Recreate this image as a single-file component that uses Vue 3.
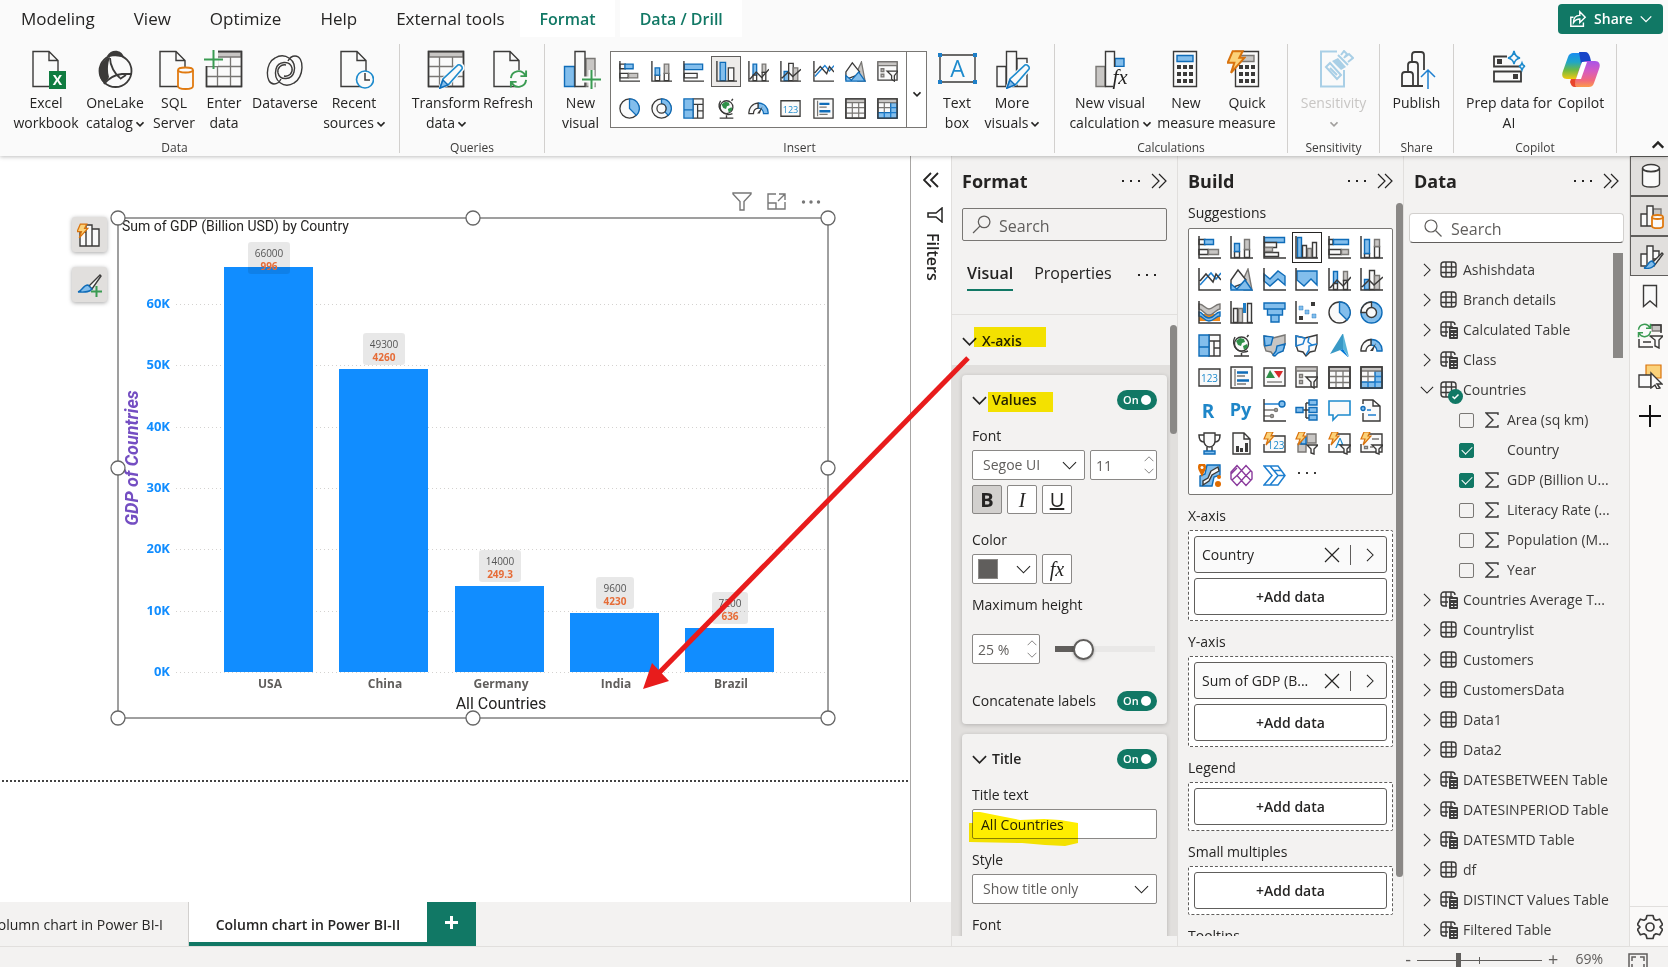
<script setup>
import { ref } from 'vue'

const menu = ['Modeling', 'View', 'Optimize', 'Help', 'External tools']

const groups = [
  { id: 'data', label: 'Data', items: [
    { icon: 'r-cut', a: '', b: '', drop: true },
    { icon: 'r-excel', a: 'Excel', b: 'workbook' },
    { icon: 'r-onelake', a: 'OneLake', b: 'catalog', drop: true },
    { icon: 'r-sql', a: 'SQL', b: 'Server' },
    { icon: 'r-enter', a: 'Enter', b: 'data' },
    { icon: 'r-dataverse', a: 'Dataverse', b: '' },
    { icon: 'r-recent', a: 'Recent', b: 'sources', drop: true },
  ] },
  { id: 'queries', label: 'Queries', items: [
    { icon: 'r-transform', a: 'Transform', b: 'data', drop: true },
    { icon: 'r-refresh', a: 'Refresh', b: '' },
  ] },
  { id: 'insert', label: 'Insert', items: [
    { icon: 'r-newvisual', a: 'New', b: 'visual' },
    { gallery: true },
    { icon: 'r-textbox', a: 'Text', b: 'box' },
    { icon: 'r-more', a: 'More', b: 'visuals', drop: true },
  ] },
  { id: 'calc', label: 'Calculations', items: [
    { icon: 'r-fx', a: 'New visual', b: 'calculation', drop: true },
    { icon: 'r-measure', a: 'New', b: 'measure' },
    { icon: 'r-quick', a: 'Quick', b: 'measure' },
  ] },
  { id: 'sens', label: 'Sensitivity', items: [
    { icon: 'r-sens', a: 'Sensitivity', b: '', drop: true, off: true },
  ] },
  { id: 'share', label: 'Share', items: [
    { icon: 'r-publish', a: 'Publish', b: '' },
  ] },
  { id: 'copilot', label: 'Copilot', items: [
    { icon: 'r-prep', a: 'Prep data for', b: 'AI' },
    { icon: 'r-copilot', a: 'Copilot', b: '' },
  ] },
]

const gallery = ['sbar', 'scol', 'cbar2', 'ccol2', 'linestack', 'lineclus', 'line', 'area', 'slicer',
  'pie', 'donut2', 'treemap', 'globe', 'gauge', 'card', 'multirow', 'table', 'matrix']

const visuals = ['sbar', 'scol', 'cbar', 'ccol', 'hbar', 'hcol', 'line', 'area', 'sarea', 'harea', 'linestack', 'lineclus',
  'ribbon', 'waterfall', 'funnel', 'scatter', 'pie', 'donut', 'treemap', 'globe', 'fmap', 'smap', 'azure', 'gauge',
  'card', 'multirow', 'kpi', 'slicer', 'table', 'matrix', 'rscript', 'python', 'influence', 'decomp', 'qna', 'narrative',
  'trophy', 'paginated', 'newcard', 'btnslicer', 'textslicer', 'listslicer', 'arcgis', 'powerapps', 'automate', 'dots']

const K = 61.35
const base = 454
const bars = [
  { name: 'USA', x: 106, top: 49, a: '66000', b: '996', w: 42, box: 24 },
  { name: 'China', x: 221, top: 151, a: '49300', b: '4260', w: 42, box: 115 },
  { name: 'Germany', x: 337, top: 368, a: '14000', b: '249.3', w: 42, box: 332 },
  { name: 'India', x: 452, top: 395, a: '9600', b: '4230', w: 38, box: 359 },
  { name: 'Brazil', x: 567, top: 410, a: '7200', b: '636', w: 36, box: 374 },
]
const ticks = [0, 1, 2, 3, 4, 5, 6].map(i => ({ t: i * 10 + 'K', y: Math.round(base - i * K) }))
const handles = [[0, 0], [355, 0], [710, 0], [0, 250], [710, 250], [0, 500], [355, 500], [710, 500]]

const wells = [
  { label: 'X-axis', field: 'Country' },
  { label: 'Y-axis', field: 'Sum of GDP (B...' },
  { label: 'Legend' },
  { label: 'Small multiples' },
]

const tables = [
  { n: 'Ashishdata' }, { n: 'Branch details' }, { n: 'Calculated Table', calc: true }, { n: 'Class', calc: true },
  { n: 'Countries', open: true, fields: [
    { n: 'Area (sq km)', sum: true, on: false },
    { n: 'Country', sum: false, on: true },
    { n: 'GDP (Billion U...', sum: true, on: true },
    { n: 'Literacy Rate (...', sum: true, on: false },
    { n: 'Population (M...', sum: true, on: false },
    { n: 'Year', sum: true, on: false },
  ] },
  { n: 'Countries Average T...', calc: true }, { n: 'Countrylist' }, { n: 'Customers' }, { n: 'CustomersData' },
  { n: 'Data1' }, { n: 'Data2' }, { n: 'DATESBETWEEN Table', calc: true }, { n: 'DATESINPERIOD Table', calc: true },
  { n: 'DATESMTD Table', calc: true }, { n: 'df' }, { n: 'DISTINCT Values Table', calc: true }, { n: 'Filtered Table', calc: true },
]

const rail = [
  { icon: 'p-data', on: true, n: 'Data' }, { icon: 'p-build', on: true, n: 'Build visual' },
  { icon: 'p-format', on: true, n: 'Format visual' }, { icon: 'p-bookmark', n: 'Bookmarks' },
  { icon: 'p-sync', n: 'Sync slicers' }, { icon: 'p-select', n: 'Selection' }, { icon: 'p-add', n: 'Add pane' },
]

const maxHeight = ref(23)
const zoomLevel = ref(32)
const titleText = ref('All Countries')
</script>

<template>
  <svg class="defs" aria-hidden="true">
    <defs>
      <linearGradient id="cp1" x1="0" y1="0" x2="0" y2="1">
        <stop offset="0" stop-color="#1a8df0" /><stop offset=".35" stop-color="#1fa6c8" /><stop offset=".65" stop-color="#6cb944" /><stop offset="1" stop-color="#f2c811" />
      </linearGradient>
      <linearGradient id="cp2" x1="0" y1="0" x2="0" y2="1">
        <stop offset="0" stop-color="#a855e8" /><stop offset=".4" stop-color="#d65bc0" /><stop offset=".75" stop-color="#f26a7c" /><stop offset="1" stop-color="#fb9a4b" />
      </linearGradient>

      <symbol id="chev-down" viewBox="0 0 16 16"><path class="ln" d="M1 4.5l7 7 7-7" /></symbol>
      <symbol id="chev-up" viewBox="0 0 16 16"><path class="ln" d="M1 11.5l7-7 7 7" /></symbol>
      <symbol id="chev-right" viewBox="0 0 16 16"><path class="ln" d="M4.5 1l7 7-7 7" /></symbol>
      <symbol id="dbl-right" viewBox="0 0 16 16"><path class="ln" d="M1 1l7 7-7 7M8 1l7 7-7 7" /></symbol>
      <symbol id="dbl-left" viewBox="0 0 16 16"><path class="ln" d="M8 1L1 8l7 7M15 1L8 8l7 7" /></symbol>
      <symbol id="dots3" viewBox="0 0 20 16"><path class="fl" d="M1 7h2v2H1zM9 7h2v2H9zM17 7h2v2h-2z" /></symbol>
      <symbol id="cross" viewBox="0 0 16 16"><path class="ln" d="M1 1l14 14M15 1L1 15" /></symbol>
      <symbol id="find" viewBox="0 0 18 18"><circle class="ln" cx="11.5" cy="6.5" r="5.5" /><path class="ln" d="M7.5 10.5L1 17" /></symbol>
      <symbol id="find-r" viewBox="0 0 18 18"><circle class="ln" cx="7" cy="7" r="6" /><path class="ln" d="M11.5 11.5l6 6" /></symbol>

      <symbol id="sbar" viewBox="0 0 23 23"><path class="w" d="M1 3.5h6v5H1zM1 13.5h9v5H1z" /><path class="b" d="M6.5 3.5h9v5h-9z" /><path class="g" d="M10.5 13.5h10v5h-10z" /><path class="d" d="M1 0v22h22" /></symbol>
      <symbol id="scol" viewBox="0 0 23 23"><path class="w" d="M4.5 15.5h5v6h-5zM14.5 13.5h5v8h-5z" /><path class="b" d="M4.5 7.5h5v8h-5z" /><path class="g" d="M14.5 3.5h5v10h-5z" /><path class="d" d="M1 0v22h22" /></symbol>
      <symbol id="cbar" viewBox="0 0 23 23"><path class="b" d="M1.5 1.5h20v5h-20z" /><path class="w" d="M1.5 6.5h12v5h-12zM1.5 16.5h14v4h-14z" /><path class="g" d="M1.5 11.5h8v4h-8z" /><path class="d" d="M1 0v22h22" /></symbol>
      <symbol id="cbar2" viewBox="0 0 23 23"><path class="b" d="M1.5 3.5h20v6h-20z" /><path class="w" d="M1.5 13.5h14v5h-14z" /><path class="d" d="M1 0v22h22" /></symbol>
      <symbol id="ccol" viewBox="0 0 23 23"><path class="b" d="M2.5 1.5h4v20h-4z" /><path class="w" d="M7.5 9.5h4v12h-4zM17.5 6.5h4v15h-4z" /><path class="g" d="M12.5 12.5h4v9h-4z" /><path class="d" d="M1 0v22h22" /></symbol>
      <symbol id="ccol2" viewBox="0 0 23 23"><path class="b" d="M4.5 1.5h6v20h-6z" /><path class="w" d="M13.5 7.5h6v14h-6z" /><path class="d" d="M1 0v22h22" /></symbol>
      <symbol id="hbar" viewBox="0 0 23 23"><path class="w" d="M1 3.5h4v5H1zM1 13.5h12v5H1z" /><path class="b" d="M5.5 3.5h15v5h-15z" /><path class="g" d="M13.5 13.5h7v5h-7z" /><path class="d" d="M1 0v22h22" /></symbol>
      <symbol id="hcol" viewBox="0 0 23 23"><path class="w" d="M4.5 17.5h5v4h-5zM14.5 10.5h5v11h-5z" /><path class="b" d="M4.5 3.5h5v14h-5z" /><path class="g" d="M14.5 3.5h5v7h-5z" /><path class="d" d="M1 0v22h22" /></symbol>
      <symbol id="line" viewBox="0 0 23 23"><path class="bl" d="M2 17l11-12 5 6 5-6" /><path class="d" d="M2 13l6-7 7 8 3-8 5 6M1 0v22h22" /></symbol>
      <symbol id="area" viewBox="0 0 23 23"><path class="g" d="M13 12l5-11 4 21h-8z" /><path class="w" d="M1 20V12L8 2l8 10-4 4z" /><path class="b" d="M1 22v-6l6 5 8-9 7 10z" /></symbol>
      <symbol id="sarea" viewBox="0 0 23 23"><path class="b" d="M1 6l6 5 8-8 7 5v9l-7-6-8 7-6-5z" /><path class="d" d="M1 0v22h22" /></symbol>
      <symbol id="harea" viewBox="0 0 23 23"><path class="b" d="M2 3h20v14l-6-6-7 7-7-6z" /><path class="d" d="M1 0v22h22" /></symbol>
      <symbol id="linestack" viewBox="0 0 23 23"><path class="b" d="M5.5 3.5h4v12h-4z" /><path class="g" d="M15.5 3.5h4v9h-4z" /><path class="w" d="M5.5 15.5h4v6h-4zM15.5 12.5h4v9h-4z" /><path class="d" d="M1 0v22h22M2 20l7-8 6 6 8-9" /></symbol>
      <symbol id="lineclus" viewBox="0 0 23 23"><path class="b" d="M4.5 11.5h5v10h-5z" /><path class="w" d="M9.5 2.5h5v19h-5z" /><path class="g" d="M14.5 7.5h5v14h-5z" /><path class="d" d="M1 0v22h22M2 19l7-7 5 5 9-8" /></symbol>
      <symbol id="ribbon" viewBox="0 0 23 23"><path class="of" d="M1 13h21v7H1z" /><path class="g" d="M1 3c5 0 6 5 10 5s6-5 11-5v5c-4 0-6 6-11 6S5 8 1 8z" /><path class="b" d="M1 11c4 0 4 6 10 6s6-6 11-6v4c-4 0-6 5-11 5S5 15 1 15z" /><path class="d" d="M1 0v22h22" /></symbol>
      <symbol id="waterfall" viewBox="0 0 23 23"><path class="w" d="M3.5 7.5h4v14h-4zM17.5 2.5h4v19h-4z" /><path class="g" d="M8.5 7.5h4v14h-4z" /><path class="bs" d="M13 2h3v10h-3z" /><path class="d" d="M1 0v22h22" /></symbol>
      <symbol id="funnel" viewBox="0 0 23 23"><path class="b" d="M1 2h21v6H1zM4.5 8h15v6h-15zM8 14h8v7H8z" /></symbol>
      <symbol id="scatter" viewBox="0 0 23 23"><path class="bf" d="M4 5h4v4H4zM10 9h4v4h-4zM17 13h4v4h-4z" /><path class="df" d="M16 1h4v4h-4zM4 15h4v4H4z" /><path class="d" d="M1 0v22h22" /></symbol>
      <symbol id="pie" viewBox="0 0 23 23"><circle class="w" cx="11.5" cy="11.5" r="10.5" /><path class="b" d="M11.5 1a10.5 10.5 0 0 1 7.5 18l-7.5-7.5z" /></symbol>
      <symbol id="donut" viewBox="0 0 23 23"><circle class="b" cx="11.5" cy="11.5" r="10.5" /><path class="w" d="M11.5 1v5.5a5 5 0 0 0-5 5H1A10.5 10.5 0 0 1 11.5 1z" /><circle class="w" cx="11.5" cy="11.5" r="5" /></symbol>
      <symbol id="donut2" viewBox="0 0 23 23"><circle class="w" cx="11.5" cy="11.5" r="10.5" /><path class="b" d="M11.5 1a10.5 10.5 0 0 1 7.5 18l-4-4a5 5 0 0 0-3.5-8.5z" /><circle class="w" cx="11.5" cy="11.5" r="5" /></symbol>
      <symbol id="treemap" viewBox="0 0 23 23"><path class="w" d="M11 1h11v21H11zM11 7h11M16 7v15M16 14h6" /><path class="b" d="M1 1h10v21H1zM1 13h10" /></symbol>
      <symbol id="globe" viewBox="0 0 23 23"><circle class="w" cx="11.5" cy="10" r="7" /><path class="gf" d="M6 7l4-3 4 1 1 3-3 1-1 3-3-1zM13 12l4-2 1 3-4 3z" /><path class="d" d="M5 3a10 10 0 0 0 13 14M11.5 19v3M4 22h15M17 3l1.5-2" /></symbol>
      <symbol id="fmap" viewBox="0 0 23 23"><path class="g" d="M1 2l9 2 4-1 8-2v9l-2 7-5 1-4 4-3-4-5-1-2-6z" /><path class="b" d="M1 2l9 1-2 8-6 1zM22 10l-8 2-1 5-3 4 2 1 3-3 5-2z" /></symbol>
      <symbol id="smap" viewBox="0 0 23 23"><path class="w" d="M1 2l9 2 4-1 8-2v9l-2 7-5 1-4 4-3-4-5-1-2-6z" /><path class="bl" d="M1 2l9 2-2 6-7 2zM22 10l-8 2v4l-3 5M14 3l-1 5 4 3 5-1" /></symbol>
      <symbol id="azure" viewBox="0 0 23 23"><path fill="#3999c6" d="M15-1L2 20l13-5z" /><path fill="#59b4d9" d="M15-1v16l6 8z" /><path fill="#0078d7" d="M15 15l6 9-9-8z" /></symbol>
      <symbol id="gauge" viewBox="0 0 23 23"><path class="b" d="M11 5.5A10.5 10.5 0 0 1 22 17h-5a6 6 0 0 0-6-6z" /><path class="w" d="M1 17A10.5 10.5 0 0 1 11 5.5V11a6 6 0 0 0-5 6z" /><path class="df" d="M16 9l-3 8h-3z" /></symbol>
      <symbol id="card" viewBox="0 0 23 23"><path class="w" d="M1 3h21v17H1z" /><text class="num" x="11.5" y="16" text-anchor="middle">123</text></symbol>
      <symbol id="multirow" viewBox="0 0 23 23"><path class="w" d="M1 1h21v21H1z" /><path class="bl2" d="M7 6.5h11M7 14.5h12" /><path class="gl" d="M5 3v17M7 10h8M7 18h9" /></symbol>
      <symbol id="kpi" viewBox="0 0 23 23"><path class="w" d="M1 2h21v18H1z" /><path class="gf" d="M3 12l4-8 5 8z" /><path fill="#d92b2b" d="M11 5h9l-4 7z" /><path class="gl" d="M4 16h15" /></symbol>
      <symbol id="slicer" viewBox="0 0 23 23"><path class="w" d="M1 1h21v20H1z" /><path class="g" d="M1 1h21v4H1zM4.5 8.5h3v3h-3zM4.5 14.5h3v3h-3z" /><path class="w" d="M11 11h12l-4 5v6l-3-2v-4z" /></symbol>
      <symbol id="table" viewBox="0 0 23 23"><path class="w" d="M1 1h21v21H1z" /><path class="g" d="M1 1h21v4H1z" /><path class="gl" d="M1 10.5h21M1 16.5h21M8 5v17M15 5v17" /><path class="d" d="M1 1h21v21H1z" /></symbol>
      <symbol id="matrix" viewBox="0 0 23 23"><path class="w" d="M1 1h21v21H1z" /><path class="b" d="M15 5h7v17H1v-6h14z" /><path class="g" d="M1 1h21v4H1z" /><path class="gl" d="M1 10.5h14M8 5v11" /><path class="bl" d="M15 10.5h7M15 16v6M8 16v6M15 16h7" /><path class="d" d="M1 1h21v21H1z" /></symbol>
      <symbol id="rscript" viewBox="0 0 23 23"><text class="big" x="10" y="19" text-anchor="middle">R</text></symbol>
      <symbol id="python" viewBox="0 0 24 23"><text class="big" x="11" y="17" text-anchor="middle">Py</text></symbol>
      <symbol id="influence" viewBox="0 0 23 23"><path class="bl" d="M1 5h15" /><circle class="b" cx="19" cy="5" r="3" /><path class="gl" d="M1 11h10M1 17h6" /><circle class="g" cx="13" cy="11" r="1.5" /><circle class="g" cx="9" cy="17" r="1.5" /><path class="d" d="M1 0v22h22" /></symbol>
      <symbol id="decomp" viewBox="0 0 23 23"><path class="d" d="M8 11h6M11 4v15M11 4h3M11 19h3" /><path class="b" d="M1 8.5h7v5H1zM14 1h8v5h-8zM14 8.5h8v5h-8zM14 16h8v5h-8z" /></symbol>
      <symbol id="qna" viewBox="0 0 23 23"><path class="wb" d="M1 2h21v14H10l-5 5v-5H1z" /></symbol>
      <symbol id="narrative" viewBox="0 0 23 23"><path class="w" d="M3 5V1h10l7 6v15H3v-8M13 1v6h7" /><circle class="b" cx="3" cy="9.5" r="2" /><path class="bl" d="M7 11h4M8 16h8" /></symbol>
      <symbol id="trophy" viewBox="0 0 23 23"><path class="w" d="M6 1h11v8c0 4-3 6-5.5 6S6 13 6 9z" /><path class="d" d="M6 3H1c0 5 2 7 5 7M17 3h5c0 5-2 7-5 7M9 15v4M14 15v4" /><path class="b" d="M6 19h11v3H6z" /></symbol>
      <symbol id="paginated" viewBox="0 0 23 23"><path class="w" d="M3 1h11l6 6v15H3zM14 1v6h6" /><path class="df" d="M6 14h3v6H6zM10 16h3v4h-3zM15 11h3v9h-3z" /></symbol>
      <symbol id="bolt" viewBox="0 0 12 15"><path class="o" d="M4 1h6L8 5h3l-8 9 2-6H1z" /></symbol>
      <symbol id="newcard" viewBox="0 0 23 23"><path class="w" d="M3 4h19v16H1v-8" /><text class="num" x="13" y="17" text-anchor="middle">123</text><use href="#bolt" x="0" y="-1" width="12" height="15" /></symbol>
      <symbol id="btnslicer" viewBox="0 0 23 23"><path class="g" d="M3 12h8v8H3zM12 2h9v9h-9z" /><path class="b" d="M6 5h5v7H6z" /><path class="w" d="M12 13h11l-4 4v5l-3-1v-4z" /><use href="#bolt" x="0" y="-1" width="12" height="15" /></symbol>
      <symbol id="textslicer" viewBox="0 0 23 23"><path class="w" d="M6 2h16v18H1v-8" /><text class="num a" x="12" y="16" text-anchor="middle">A</text><path class="w" d="M12 13h11l-4 4v5l-3-1v-4z" /><use href="#bolt" x="0" y="-1" width="12" height="15" /></symbol>
      <symbol id="listslicer" viewBox="0 0 23 23"><path class="w" d="M6 2h16v18H1v-8" /><path class="gl" d="M12 7h7M4.5 14.5h3v2h-3zM10 15h3" /><path class="w" d="M12 13h11l-4 4v5l-3-1v-4z" /><use href="#bolt" x="0" y="-1" width="12" height="15" /></symbol>
      <symbol id="arcgis" viewBox="0 0 23 23"><path class="b" d="M9 1h13v10l-6 2-2 9H2V12l5-2z" /><path class="w" d="M13 7l7-4 1 4-7 4-3 6-6 4v-4l5-3z" /><path fill="#e06c00" d="M4-1a4 4 0 0 1 4 4c0 3-2 5-4 10C2 8 0 6 0 3a4 4 0 0 1 4-4z" /><circle cx="4" cy="3.5" r="1.5" fill="#fff" /><circle cx="20" cy="20" r="3" fill="#e06c00" /><circle cx="21" cy="13" r="2" fill="#e06c00" /></symbol>
      <symbol id="powerapps" viewBox="0 0 23 23"><path class="pu" d="M11.5 6.5L7 1.5 1 8v7l6 6.500 4.500-5 4.500 5 6-6.500V8l-6-6.500zM11.500 6.500l4.500 5-4.500 5-4.500-5zM1 10l6-6M7 11.500L2 16M16 11.500l5-5M16 11.500l5 5" /></symbol>
      <symbol id="automate" viewBox="0 0 23 23"><path class="bl" d="M1 2h14l7 9.5-7 9.5H1l8-9.5zM7 2l8 9.500M15 11.500L7 21M11 6.500h7M15 11.500h7" /></symbol>
      <symbol id="dots" viewBox="0 0 23 23"><path class="df" d="M3 8h2v2H3zM11 8h2v2h-2zM19 8h2v2h-2z" /></symbol>

      <symbol id="doc" viewBox="0 0 40 40"><path class="w" d="M7 1.5h16l9 9v26H7zM23 1.5v9h9" /></symbol>
      <symbol id="grid36" viewBox="0 0 40 40"><path class="w" d="M2.5 1.5h35v35h-35z" /><path class="g" d="M3 2h34v5H3z" /><path class="gl" d="M3 16.5h34M3 26.5h34M13.5 7v29M26.5 7v29" /><path class="d" d="M2.5 1.5h35v35h-35z" /></symbol>
      <symbol id="pen" viewBox="0 0 26 26"><path class="wh" d="M1 25l3-9L19 1c3-1 6 2 5 5L10 21z" /><path class="wb" d="M1 25l3-9L19 2c2-1 5 2 4 4L10 21z" /><path class="b" d="M1 25l3-8 5 5z" /></symbol>
      <symbol id="spin" viewBox="0 0 20 20"><path class="gn" d="M2 9a8 8 0 0 1 15-3M18 1v6h-6M18 11a8 8 0 0 1-15 3M2 19v-6h6" /></symbol>

      <symbol id="r-cut" viewBox="0 0 40 40"><path class="w" d="M1 20h35v18H1z" /><path class="g" d="M1 20h35v4H1z" /><path class="gl" d="M1 29h35M1 34h35M28 24v14" /></symbol>
      <symbol id="r-excel" viewBox="0 0 40 40"><use href="#doc" width="40" height="40" /><path fill="#107c41" d="M23 21h17v18H23z" /><text class="xl" x="31.5" y="35" text-anchor="middle">X</text></symbol>
      <symbol id="r-onelake" viewBox="0 0 40 40"><circle class="dn" cx="20.5" cy="21" r="16" /><path class="df" d="M12 6c4-7 14-7 17 1-5-1-11-1-17-1zM15 7C3 11 1 26 9 33c3-2 4-4 5-6-2-7-1-14 1-20z" /><path class="dn" d="M15 8c0 8 5 16 10 20M9 34c4-5 9-9 18-10h10M25 29l6-4" /></symbol>
      <symbol id="r-sql" viewBox="0 0 40 40"><use href="#doc" x="-1" width="40" height="40" /><path class="oc" d="M24 20v16c0 4 15 4 15 0V20" /><ellipse class="oc" cx="31.5" cy="20" rx="7.5" ry="2.5" /></symbol>
      <symbol id="r-enter" viewBox="0 0 40 40"><use href="#grid36" width="40" height="40" /><path class="wf" d="M0 0h14v16H0z" /><path class="gn" d="M0 9.5h19M9.5 0v19" /></symbol>
      <symbol id="r-dataverse" viewBox="0 0 40 40"><path class="dt2" d="M9 34C0 34 0 13 10 8c10-6 22 2 19 14-2 8-14 9-16 1-1-5 3-9 8-8M30 6c10 0 9 22-1 27-10 6-21-2-18-14 2-8 14-9 16-1 1 5-3 9-8 8M30 6c-4 0-6 3-7 5M9 34c4 0 6-3 7-5" /></symbol>
      <symbol id="r-recent" viewBox="0 0 40 40"><use href="#doc" width="40" height="40" /><circle class="wb" cx="31" cy="29.5" r="8.5" /><path class="d" d="M31 23v7h5" /></symbol>
      <symbol id="r-transform" viewBox="0 0 40 40"><use href="#grid36" width="40" height="40" /><use href="#pen" x="13" y="13" width="26" height="26" /></symbol>
      <symbol id="r-refresh" viewBox="0 0 40 40"><use href="#doc" x="-1" width="40" height="40" /><circle class="wf" cx="31" cy="29" r="9" /><use href="#spin" x="21" y="19" width="19" height="20" /></symbol>
      <symbol id="r-newvisual" viewBox="0 0 40 40"><path class="g" d="M25 8.5h9v28h-9z" /><path class="b" d="M3.5 16.5h10v20h-10z" /><path class="w" d="M14 1.5h10v35H14z" /><path class="whl" d="M21 29.5h19M30.5 20v19" /><path class="gn" d="M21 29.5h19M30.5 20v19" /></symbol>
      <symbol id="r-textbox" viewBox="0 0 40 40"><path class="w" d="M3 5h35v27H3z" /><path class="bs" d="M1 3h4v4H1zM36 3h4v4h-4zM1 30h4v4H1zM36 30h4v4h-4z" /><text class="ta" x="20.5" y="27" text-anchor="middle">A</text></symbol>
      <symbol id="r-more" viewBox="0 0 40 40"><path class="w" d="M25 8.5h10v28H25zM5 16.5h9v20H5zM14.5 1.5h10v35h-10z" /><use href="#pen" x="14" y="13" width="26" height="26" /></symbol>
      <symbol id="r-fx" viewBox="0 0 40 40"><path class="g" d="M6 16.5h9v20H6z" /><path class="b" d="M25 8.5h9v8h-9z" /><path class="w" d="M15.5 1.5h9v35h-9z" /><path class="wf" d="M23 17h14v21H23z" /><text class="fx" x="30" y="34" text-anchor="middle">fx</text></symbol>
      <symbol id="calc" viewBox="0 0 26 38"><path class="w" d="M1.5 1.5h23v35h-23z" /><path class="df" d="M5 15h4v4H5zM11 15h4v4h-4zM17 15h4v4h-4zM5 22h4v4H5zM11 22h4v4h-4zM17 22h4v4h-4zM5 29h4v4H5zM11 29h4v4h-4zM17 29h4v4h-4z" /></symbol>
      <symbol id="r-measure" viewBox="0 0 40 40"><use href="#calc" x="6" width="26" height="38" /><path class="b" d="M11 5.5h16v6H11z" /></symbol>
      <symbol id="r-quick" viewBox="0 0 40 40"><use href="#calc" x="7" width="26" height="38" /><path class="g" d="M12 5.5h15v6H12z" /><use href="#bolt" x="-1" y="-1" width="20" height="26" /></symbol>
      <symbol id="r-sens" viewBox="0 0 40 40"><path class="lb" d="M30 20v16.5H7v-35h16" /><path class="lbf" d="M24 8l8 9-5 3-9-9z" /><path class="lb" d="M12 17l4-4 11 12-4 4zM16 18l7 7M24 5l10 10M27 5l3-4 3 3-3 4M34 12l5-4-4-4-4 3" /></symbol>
      <symbol id="r-publish" viewBox="0 0 40 40"><path class="dn" d="M15 12V5q0-3 3-3h6q3 0 3 3v15M11 22v-7q0-3 3-3h4q3 0 3 3v21M5 36V25q0-3 3-3h5q3 0 3 3v11zM16 36h10" /><path class="bl" d="M31 39V20M24 27l7-7 7 7" /></symbol>
      <symbol id="r-prep" viewBox="0 0 40 40"><path class="dn" d="M18 6.5H5v10h27M5 21.5h27v10H5z" /><path class="df" d="M8 9h5v5H8zM24 24h5v5h-5z" /><path class="wb" d="M25 1q1 6 6 7-5 1-6 6-1-5-6-6 5-1 6-7zM33 13q1 3 3 3-2 1-3 4-1-3-3-4 2 0 3-3z" /></symbol>
      <symbol id="r-copilot" viewBox="0 0 40 40"><path fill="url(#cp1)" d="M12 3h11c2 0 4 2 3 5l-5 15c-1 4-3 6-7 6H6C2 29 0 26 2 21L7 7c1-3 3-4 5-4z" /><path fill="url(#cp2)" d="M28 37H17c-2 0-4-2-3-5l5-15c1-4 3-6 7-6h8c4 0 6 3 4 8l-5 14c-1 3-3 4-5 4z" /><path fill="#1745c8" d="M18 2h6c3 0 4 2 5 5l1 4h-5c-3 0-4 1-5 3z" /><path fill="#fff" d="M21 12h5l-6 17h-5z" /><path fill="#e8452c" d="M10 29h5l-1 4c0 3 1 4 3 4h-3c-3 0-4-2-5-5z" /></symbol>

      <symbol id="tbl" viewBox="0 0 18 18"><rect class="tn" x="1" y="1" width="15" height="15" rx="3" /><path class="tn" d="M1 6h15M1 11.5h15M6 1v15M11.5 1v15" /></symbol>
      <symbol id="tblc" viewBox="0 0 18 18"><path class="tn" d="M7 15H4a3 3 0 0 1-3-3V4a3 3 0 0 1 3-3h8q3 0 3 3M1 6h12M1 11h7M6 1v14M11 1v5" /><rect class="df" x="9" y="6" width="9" height="12" rx="1" /><path class="tw" d="M10.5 8.5h6M11 12.5h2M14.5 12.5h2M11 15.5h2M14.5 15.5h2" /></symbol>
      <symbol id="sigma" viewBox="0 0 14 16"><path class="tn" d="M13 3V1H1l7 7-7 7h12v-2" /></symbol>

      <symbol id="p-data" viewBox="0 0 26 26"><ellipse class="w" cx="13" cy="5" rx="8.5" ry="3.5" /><path class="w" d="M4.5 5v16c0 4 17 4 17 0V5c0 5-17 5-17 0z" /></symbol>
      <symbol id="p-build" viewBox="0 0 26 26"><path class="g" d="M15 6h8v8h-8z" /><path class="w" d="M3 11h6v12H3zM9 3h6v20H9z" /><path class="oc" d="M14 14v9c0 3 11 3 11 0v-9" /><ellipse class="oc" cx="19.5" cy="14" rx="5.5" ry="2" /></symbol>
      <symbol id="p-format" viewBox="0 0 26 26"><path class="w" d="M3 11h6v12H3zM15 8h6v8h-6zM9 3h6v20H9z" /><path class="w" d="M24 10l1 1-9 12-3-2z" /><path class="b" d="M14 18l3 3c-2 4-6 5-11 4 4-1 4-7 8-7z" /></symbol>
      <symbol id="p-bookmark" viewBox="0 0 26 26"><path class="w" d="M6.5 2.5h13v21L13 18l-6.5 5.5z" /></symbol>
      <symbol id="p-sync" viewBox="0 0 26 26"><path class="g" d="M15 2h9v6h-9z" /><path class="d" d="M2 16v8h14M14 2h10v8M6 19h8" /><path class="w" d="M13 13h13l-4 4v8l-4-2v-6z" /><circle class="wf" cx="7.5" cy="7.5" r="7" /><use href="#spin" x="0" y="0" width="15" height="15" /></symbol>
      <symbol id="p-select" viewBox="0 0 26 26"><path class="o" d="M9 2h15v13H9z" /><path class="w" d="M2 12h12v12H2z" /><path class="w" d="M14 10l11 11h-5l3 4-3 1-2-4-4 3z" /></symbol>
      <symbol id="p-add" viewBox="0 0 26 26"><path class="ad" d="M2 13h22M13 2v22" /></symbol>
      <symbol id="gear" viewBox="0 0 26 26"><path class="gr" d="M10 1.5h6l1 3.5 2 1.2 3.6-1 3 5.2-2.6 2.6 2.6 2.6-3 5.2-3.6-1-2 1.2-1 3.5h-6l-1-3.5-2-1.2-3.6 1-3-5.2L3 13 .4 10.4l3-5.2 3.6 1L9 5z" /><circle class="gr" cx="13" cy="13" r="4" /></symbol>
    </defs>
  </svg>

  <div class="app">
    <header class="ribbon">
      <nav class="menu">
        <a v-for="m in menu" :key="m" href="#">{{ m }}</a>
        <a class="ctx first" href="#">Format</a>
        <a class="ctx" href="#">Data / Drill</a>
        <button class="share" type="button">
          <svg viewBox="0 0 20 20" width="18" height="18"><path d="M5 8H2v10h14v-4M12 2l6 6-6 6v-4c-3 0-5 1-7 4 0-5 2-8 7-8z" fill="none" stroke="#fff" stroke-width="1.6" /></svg>
          Share
          <svg class="md" width="12" height="12"><use href="#chev-down" /></svg>
        </button>
      </nav>
      <div class="groups">
        <section v-for="g in groups" :key="g.id" class="group" :class="'g-' + g.id">
          <div class="items">
            <template v-for="(it, i) in g.items" :key="i">
              <div v-if="it.gallery" class="gallery">
                <div class="gcells">
                  <button v-for="v in gallery" :key="v" type="button" :class="{ picked: v === 'ccol2' }" :aria-label="v"><svg width="21" height="21"><use :href="'#' + v" /></svg></button>
                </div>
                <button class="gdrop" type="button" aria-label="More visual types"><svg class="sm" width="8" height="8"><use href="#chev-down" /></svg></button>
              </div>
              <button v-else class="rb" :class="{ off: it.off }" type="button" :aria-label="(it.a + ' ' + it.b).trim() || 'Get data'">
                <svg width="40" height="40"><use :href="'#' + it.icon" /></svg>
                <span>{{ it.a }}</span>
                <span>{{ it.b }}<svg v-if="it.drop" class="sm" width="8" height="8"><use href="#chev-down" /></svg></span>
              </button>
            </template>
          </div>
          <div class="glabel">{{ g.label }}</div>
        </section>
        <button class="collapse" type="button" aria-label="Collapse ribbon"><svg class="sm" width="12" height="12"><use href="#chev-up" /></svg></button>
      </div>
    </header>

    <main class="main">
      <div class="work">
        <div class="stage">
          <div class="canvas">
            <div class="vtools">
              <button type="button" aria-label="Suggest visual"><svg width="26" height="26" viewBox="0 0 26 26"><path class="w" d="M3 10h6v14H3zM9 3h6v21H9zM15 7h7v17h-7z" /><use href="#bolt" x="-1" y="1" width="13" height="16" /></svg></button>
              <button type="button" aria-label="Format visual"><svg width="26" height="26" viewBox="0 0 26 26"><path class="w" d="M23 3l1 1-9 13-3-3z" /><path class="b" d="M11 13l4 4c-3 4-8 3-14 3 4-1 5-7 10-7z" /><path class="gn" d="M14 19.5h11M19.5 14v11" /></svg></button>
            </div>
            <div class="vhead">
              <svg width="20" height="19" viewBox="0 0 20 19"><path d="M1 1h18v1l-7 7.5V18H8V9.5L1 2z" fill="none" stroke="#777" stroke-width="1.4" /></svg>
              <svg width="19" height="17" viewBox="0 0 19 17"><path d="M9 1H1v15h17V9M12 1h6v6M18 1l-7 7M1 10h8v6" fill="none" stroke="#777" stroke-width="1.4" /></svg>
              <svg width="20" height="16" viewBox="0 0 20 16"><circle cx="2.5" cy="8" r="1.7" fill="#777" /><circle cx="10" cy="8" r="1.7" fill="#777" /><circle cx="17.5" cy="8" r="1.7" fill="#777" /></svg>
            </div>
            <svg class="chart" width="710" height="500" viewBox="0 0 710 500">
              <text class="ctitle" x="4" y="13">Sum of GDP (Billion USD) by Country</text>
              <g v-for="t in ticks" :key="t.t">
                <line x1="58" x2="708" :y1="t.y + 0.5" :y2="t.y + 0.5" class="gridl" />
                <text class="tick" x="52" :y="t.y + 4" text-anchor="end">{{ t.t }}</text>
              </g>
              <text class="ytitle" transform="translate(20 240) rotate(-90)" text-anchor="middle">GDP of Countries</text>
              <g v-for="b in bars" :key="b.name">
                <rect :x="b.x" :y="b.top" width="89" :height="base - b.top" fill="#118dff" />
                <rect :x="b.x + 45 - b.w / 2" :y="b.box" :width="b.w" height="32" rx="3" class="lbox" />
                <text class="la" :x="b.x + 45" :y="b.box + 15" text-anchor="middle">{{ b.a }}</text>
                <text class="lb2" :x="b.x + 45" :y="b.box + 28" text-anchor="middle">{{ b.b }}</text>
                <text class="cat" :x="b.x + 46" y="470" text-anchor="middle">{{ b.name }}</text>
              </g>
              <text class="xtitle" x="383" y="491" text-anchor="middle">All Countries</text>
              <rect x="0" y="0" width="710" height="500" fill="none" stroke="#808080" stroke-width="1.5" />
              <circle v-for="(h, i) in handles" :key="i" :cx="h[0]" :cy="h[1]" r="7" fill="#fff" stroke="#666" stroke-width="1.3" />
            </svg>
            <div class="pageedge"></div>
          </div>
          <aside class="filters">
            <button type="button" aria-label="Expand filters"><svg class="md" width="16" height="16"><use href="#dbl-left" /></svg></button>
            <svg width="16" height="16" viewBox="0 0 16 16"><path d="M15 1v14L9 10H1V6h8z" fill="none" stroke="#252423" stroke-width="1.5" /></svg>
            <span>Filters</span>
          </aside>
        </div>
        <nav class="pages">
          <button class="page" type="button">Column chart in Power BI-I</button>
          <button class="page on" type="button">Column chart in Power BI-II</button>
          <button class="addpage" type="button" aria-label="New page"><svg width="13" height="13" viewBox="0 0 13 13"><path d="M0 6.5h13M6.5 0v13" stroke="#fff" stroke-width="3" /></svg></button>
        </nav>
      </div>

      <section class="pane format">
        <div class="phead"><h2>Format</h2><svg width="20" height="16"><use href="#dots3" /></svg><svg width="16" height="16"><use href="#dbl-right" /></svg></div>
        <label class="search sq"><svg width="19" height="19"><use href="#find" /></svg><input type="text" placeholder="Search" aria-label="Search format"></label>
        <div class="ptabs"><button class="on" type="button">Visual</button><button type="button">Properties</button><svg width="20" height="16"><use href="#dots3" /></svg></div>
        <div class="fbody">
          <button class="sect" type="button"><svg class="md" width="15" height="15"><use href="#chev-down" /></svg>X-axis</button>
          <div class="cards">
            <div class="card">
              <div class="chead"><svg class="md" width="15" height="15"><use href="#chev-down" /></svg><b>Values</b><label class="toggle"><input type="checkbox" role="switch" checked aria-label="Values"><span>On</span></label></div>
              <label class="lbl gap" for="ff">Font</label>
              <div class="row">
                <div class="sel w1"><select id="ff"><option>Segoe UI</option></select><svg width="15" height="15"><use href="#chev-down" /></svg></div>
                <div class="numbox w2"><input type="text" value="11" aria-label="Font size"><span class="spins"><svg width="10" height="10"><use href="#chev-up" /></svg><svg width="10" height="10"><use href="#chev-down" /></svg></span></div>
              </div>
              <div class="row biu"><button class="on bb" type="button">B</button><button class="ii" type="button">I</button><button class="uu" type="button">U</button></div>
              <div class="lbl gap">Color</div>
              <div class="row"><button class="swatch" type="button" aria-label="Color"><i></i><svg width="15" height="15"><use href="#chev-down" /></svg></button><button class="fxb" type="button">fx</button></div>
              <label class="lbl" for="mh">Maximum height</label>
              <div class="row mh">
                <div class="numbox w3"><input id="mh" type="text" value="25 %"><span class="spins"><svg width="10" height="10"><use href="#chev-up" /></svg><svg width="10" height="10"><use href="#chev-down" /></svg></span></div>
                <input v-model="maxHeight" class="slider" type="range" min="0" max="100" aria-label="Maximum height">
              </div>
              <div class="chead last"><span>Concatenate labels</span><label class="toggle"><input type="checkbox" role="switch" checked aria-label="Concatenate labels"><span>On</span></label></div>
            </div>
            <div class="card">
              <div class="chead"><svg class="md" width="15" height="15"><use href="#chev-down" /></svg><b>Title</b><label class="toggle"><input type="checkbox" role="switch" checked aria-label="Title"><span>On</span></label></div>
              <label class="lbl gap" for="tt">Title text</label>
              <input id="tt" v-model="titleText" class="txt" type="text">
              <label class="lbl" for="st">Style</label>
              <div class="sel"><select id="st"><option>Show title only</option></select><svg width="15" height="15"><use href="#chev-down" /></svg></div>
              <div class="lbl">Font</div>
              <div class="sel"></div>
            </div>
          </div>
          <i class="thumb ft"></i>
        </div>
      </section>

      <section class="pane build">
        <div class="phead"><h2>Build</h2><svg width="20" height="16"><use href="#dots3" /></svg><svg width="16" height="16"><use href="#dbl-right" /></svg></div>
        <div class="bbody">
          <div class="slabel">Suggestions</div>
          <div class="vgrid">
            <button v-for="v in visuals" :key="v" type="button" :class="{ picked: v === 'ccol' }" :aria-label="v"><svg width="23" height="23"><use :href="'#' + v" /></svg></button>
          </div>
          <template v-for="w in wells" :key="w.label">
            <div class="wlabel">{{ w.label }}</div>
            <div class="well">
              <div v-if="w.field" class="field"><span>{{ w.field }}</span><svg width="16" height="16"><use href="#cross" /></svg><i></i><svg width="14" height="14"><use href="#chev-right" /></svg></div>
              <button type="button">+Add data</button>
            </div>
          </template>
          <div class="wlabel">Tooltips</div>
        </div>
        <i class="thumb bt"></i>
      </section>

      <section class="pane data">
        <div class="phead"><h2>Data</h2><svg width="20" height="16"><use href="#dots3" /></svg><svg width="16" height="16"><use href="#dbl-right" /></svg></div>
        <label class="search rd"><svg width="18" height="18"><use href="#find-r" /></svg><input type="text" placeholder="Search" aria-label="Search data"></label>
        <div class="tree">
          <template v-for="t in tables" :key="t.n">
            <div class="trow">
              <svg class="tc" width="14" height="14"><use :href="t.open ? '#chev-down' : '#chev-right'" /></svg>
              <span class="ti"><svg width="18" height="18"><use :href="t.calc ? '#tblc' : '#tbl'" /></svg>
                <svg v-if="t.open" class="badge" width="15" height="15" viewBox="0 0 15 15"><circle cx="7.5" cy="7.5" r="7.5" fill="#117865" /><path d="M4.5 7.5l2 2 4-4" fill="none" stroke="#fff" stroke-width="1.5" /></svg></span>
              {{ t.n }}
            </div>
            <label v-for="f in t.fields || []" :key="f.n" class="frow">
              <input type="checkbox" :checked="f.on">
              <span class="sg"><svg v-if="f.sum" width="14" height="16"><use href="#sigma" /></svg></span>
              {{ f.n }}
            </label>
          </template>
        </div>
        <i class="thumb dt"></i>
      </section>

      <aside class="rail">
        <button v-for="r in rail" :key="r.icon" type="button" :class="{ on: r.on }" :aria-label="r.n"><svg width="26" height="26"><use :href="'#' + r.icon" /></svg></button>
        <button class="gearb" type="button" aria-label="Settings"><svg width="26" height="26"><use href="#gear" /></svg></button>
      </aside>
    </main>

    <footer class="status">
      <button type="button">-</button>
      <input v-model="zoomLevel" type="range" min="0" max="100" aria-label="Zoom">
      <button type="button">+</button>
      <span>69%</span>
      <svg width="20" height="14" viewBox="0 0 20 14"><path d="M1 14V1h18v13M4 8V4h4M12 4h4v4M4 11v3M16 11v3" fill="none" stroke="#605e5c" stroke-width="1.5" /></svg>
    </footer>

    <svg class="note mark"><path d="M974 327h72v20h-72zM988 392h65v20h-65zM973 812h7l20 4 20 4 24-1 16 1 18 3v20l-13 3-20-1-23-2-53-1v-19h4z" fill="#ffee00" /></svg>
    <svg class="note"><path d="M968 358L655 677" stroke="#e81c1c" stroke-width="5" /><path d="M643 689l9-26 17 18z" fill="#e81c1c" /></svg>
  </div>
</template>

<style>
html, body { margin: 0; overflow: hidden; }
</style>

<style scoped>
.defs { position: absolute; width: 0; height: 0; }
.app { position: relative; display: flex; flex-direction: column; height: 100vh; overflow: hidden; background: #f3f2f1; color: #252423; font: 14px/20px "Open Sans", "Noto Sans", sans-serif; }
.app *, .app { box-sizing: border-box; }
button { font: inherit; color: inherit; background: none; border: 0; padding: 0; margin: 0; }
input, select { font: inherit; color: inherit; margin: 0; }
svg { flex: none; color: #252423; }
h2 { margin: 0; }

.ln { fill: none; stroke: currentColor; stroke-width: var(--sw, 1.2); }
.sm { --sw: 3.2; }
.md { --sw: 1.8; }
.fl { fill: currentColor; }
.d { fill: none; stroke: #3b3a39; stroke-width: 1.5; }
.dn { fill: none; stroke: #3b3a39; stroke-width: 1.8; }
.dt2 { fill: none; stroke: #3b3a39; stroke-width: 1.4; }
.df { fill: #3b3a39; }
.w { fill: #fafafa; stroke: #3b3a39; stroke-width: 1.4; }
.wf { fill: #fafafa; }
.wh { fill: #fafafa; stroke: #fafafa; stroke-width: 3; }
.whl { fill: none; stroke: #fafafa; stroke-width: 6; }
.wb { fill: #fafafa; stroke: #1e8bcd; stroke-width: 1.6; }
.b { fill: #83beec; stroke: #0f6cb8; stroke-width: 1.4; }
.bf { fill: #83beec; stroke: #0f6cb8; stroke-width: .4; }
.bs { fill: #1e7fc8; }
.bl { fill: none; stroke: #1e7fd0; stroke-width: 1.5; }
.bl2 { fill: none; stroke: #0f6cb8; stroke-width: 2.5; }
.g { fill: #c8c6c4; stroke: #797774; stroke-width: 1.4; }
.gl { fill: none; stroke: #797774; stroke-width: 1.3; }
.gf { fill: #2f9048; }
.gn { fill: none; stroke: #3a9b52; stroke-width: 2; }
.o { fill: #fbd27a; stroke: #d9730d; stroke-width: 1.2; }
.of { fill: #f08a1c; }
.oc { fill: #fafafa; stroke: #e07a10; stroke-width: 1.8; }
.pu { fill: none; stroke: #8a3a9c; stroke-width: 1.4; }
.lb { fill: none; stroke: #a9cfe6; stroke-width: 2; }
.lbf { fill: #a9cfe6; }
.tn { fill: none; stroke: #3b3a39; stroke-width: 1.4; }
.tw { fill: none; stroke: #f3f2f1; stroke-width: 1.2; }
.ad { fill: none; stroke: #111; stroke-width: 2; }
.gr { fill: none; stroke: #3b3a39; stroke-width: 1.7; stroke-linejoin: round; }
.num { font: 10px "Open Sans", sans-serif; fill: #1e8bcd; }
.num.a { font-size: 15px; }
.big { font: 700 19px "Open Sans", sans-serif; fill: #1e86c8; }
.xl { font: 700 14px "Open Sans", sans-serif; fill: #fff; }
.ta { font: 23px "Open Sans", sans-serif; fill: #1e8bcd; }
.fx { font: italic 21px "Liberation Serif", serif; fill: #252423; }

.ribbon { flex: none; height: 156px; background: #fafafa; box-shadow: 0 1px 4px rgba(0,0,0,.25); position: relative; z-index: 2; }
.menu { display: flex; height: 37px; align-items: stretch; padding-left: 1px; }
.menu a { color: #252423; text-decoration: none; font-size: 17px; line-height: 38px; padding: 0 19px 0 20px; }
.menu .ctx { color: #117865; font-weight: 600; background: #fff; font-size: 16px; }
.menu .first { margin: 0 5px 0 -4px; }
.share { margin: 4px 5px 3px auto; width: 105px; height: 30px; border-radius: 4px; background: #117865; color: #fff; font-weight: 600; display: flex; align-items: center; justify-content: center; gap: 7px; }
.share svg { color: #fff; }
.groups { display: flex; height: 119px; padding-top: 7px; position: relative; }
.group { height: 109px; border-right: 1px solid #d2d0ce; display: flex; flex-direction: column; }
.items { display: grid; height: 96px; padding-top: 6px; flex: none; }
.glabel { text-align: center; font-size: 12px; line-height: 16px; color: #3b3a39; }
.g-data { margin-left: -50px; width: 450px; }
.g-data .items { grid-template-columns: 58px 76px 62px 56px 44px 78px 60px; }
.g-queries { width: 145px; }
.g-queries .items { grid-template-columns: 76px 48px; padding-left: 8px; }
.g-insert { width: 510px; }
.g-insert .items { grid-template-columns: 45px 317px 46px 50px; padding-left: 13px; column-gap: 7px; }
.g-calc { width: 233px; }
.g-calc .items { grid-template-columns: 90px 62px 60px; padding-left: 10px; }
.g-sens { width: 92px; }
.g-share { width: 74px; }
.g-copilot { width: 163px; }
.g-copilot .items { grid-template-columns: 90px 54px; padding-left: 10px; }
.rb { display: flex; flex-direction: column; align-items: center; white-space: nowrap; }
.rb svg:first-child { margin-bottom: 3px; }
.rb span { height: 20px; display: flex; align-items: center; gap: 3px; }
.rb .sm { margin-top: 5px; }
.off { color: #c8c6c4; }
.off .sm { color: #a19f9d; }
.gallery { display: flex; height: 77px; margin-top: 1px; border: 1px solid #797774; background: #fff; }
.gcells { flex: 1; display: grid; grid-template-columns: repeat(9, 1fr); padding: 3px 2px 1px; }
.gcells button { display: flex; align-items: center; justify-content: center; border: 1px solid transparent; margin: 1px 1px 4px; }
.gcells button:nth-child(n + 10) { margin: 3px 1px 2px; }
.gcells .picked { background: #edebe9; border-color: #605e5c; }
.gdrop { width: 20px; border-left: 1px solid #797774; display: flex; align-items: center; justify-content: center; padding-top: 8px; }
.collapse { position: absolute; right: 4px; bottom: 0; }

.main { flex: 1; min-height: 0; display: flex; }
.work { flex: 1; min-width: 0; display: flex; flex-direction: column; }
.stage { flex: 1; min-height: 0; display: flex; background: #fff; }
.canvas { position: relative; flex: 1; border-right: 1px solid #a8a6a4; overflow: hidden; }
.filters { width: 40px; display: flex; flex-direction: column; align-items: flex-start; padding: 16px 0 0 12px; }
.filters button { height: 16px; display: flex; }
.filters > svg { margin: 19px 0 0 4px; }
.filters span { writing-mode: vertical-rl; font-size: 16px; font-weight: 600; margin-top: 10px; line-height: 20px; }
.vtools { position: absolute; left: 72px; top: 61px; display: flex; flex-direction: column; gap: 15px; }
.vtools button { width: 35px; height: 35px; background: #e1dfdd; border-radius: 3px; box-shadow: 0 1px 4px rgba(0,0,0,.35); display: flex; align-items: center; justify-content: center; }
.vhead { position: absolute; left: 732px; top: 36px; display: flex; align-items: center; gap: 15px; }
.chart { position: absolute; left: 118px; top: 62px; overflow: visible; }
.ctitle { font: 14px Roboto, sans-serif; fill: #252423; }
.xtitle { font: 16px Roboto, sans-serif; fill: #252423; }
.ytitle { font: italic 700 18px Roboto, sans-serif; fill: #744ec2; }
.gridl { stroke: #d4d2d0; stroke-width: 1; stroke-dasharray: 1 3; }
.tick { font: 700 13px "Open Sans", sans-serif; fill: #118dff; }
.cat { font: 700 12px "Open Sans", sans-serif; fill: #605e5c; }
.lbox { fill: #000; fill-opacity: .09; }
.la { font: 10px "Open Sans", sans-serif; fill: #555; }
.lb2 { font: 700 10px "Open Sans", sans-serif; fill: #e66c37; }
.pageedge { position: absolute; left: 2px; right: 2px; top: 624px; border-top: 2px dotted #444; }

.pages { flex: none; height: 44px; display: flex; overflow: hidden; }
.page { white-space: nowrap; padding: 2px 25px 0; border-right: 1px solid #d2d0ce; margin-left: -38px; width: 227px; flex: none; text-align: right; }
.page.on { margin: 0; width: 238px; padding: 5px 0 0; text-align: center; background: #fff; font-weight: 600; border: 0; border-bottom: 4px solid #117865; }
.addpage { width: 49px; background: #117865; }

.pane { position: relative; width: 226px; flex: none; border-left: 1px solid #e1dfdd; display: flex; flex-direction: column; min-height: 0; }
.phead { flex: none; height: 50px; display: flex; align-items: center; padding: 0 10px; gap: 10px; }
.phead h2 { flex: 1; font-size: 18px; line-height: 24px; font-weight: 700; }
.search { flex: none; display: flex; align-items: center; gap: 8px; color: #605e5c; }
.search input { border: 0; background: none; outline: 0; padding: 2px 0 0; width: 100px; font-size: 16px; }
.search input::placeholder { color: #605e5c; opacity: 1; }
.search svg { color: #605e5c; }
.sq { margin: 2px 10px 0; height: 33px; border: 1px solid #797774; border-radius: 2px; padding-left: 9px; }
.rd { margin: 7px 5px 0; height: 30px; border: 1px solid #d2d0ce; border-bottom-color: #605e5c; border-radius: 4px; background: #fff; padding-left: 14px; gap: 9px; }
.ptabs { flex: none; display: flex; align-items: center; height: 32px; margin: 18px 0 23px; padding: 0 15px; gap: 21px; font-size: 16px; }
.ptabs button { height: 32px; padding-bottom: 2px; border-bottom: 2px solid transparent; }
.ptabs .on { font-weight: 600; border-color: #117865; }
.ptabs svg { margin-left: auto; margin-right: 5px; }
.fbody { position: relative; flex: 1; min-height: 0; margin-bottom: 10px; border-top: 1px solid #e1dfdd; overflow: hidden; }
.sect { width: 100%; height: 50px; display: flex; align-items: center; gap: 5px; padding: 2px 10px 0; font-weight: 600; }
.cards { background: #e1dfdd; padding: 10px; display: flex; flex-direction: column; gap: 10px; }
.card { background: #f3f2f1; border-radius: 4px; box-shadow: 0 1px 4px rgba(0,0,0,.2); padding: 15px 10px 13px; }
.chead { display: flex; align-items: center; gap: 5px; height: 20px; }
.chead b { font-weight: 600; }
.chead.last { margin-top: 27px; }
.toggle { margin-left: auto; position: relative; width: 40px; height: 20px; border-radius: 10px; background: #117865; color: #fff; font-size: 11px; line-height: 20px; padding-left: 6px; font-weight: 600; }
.toggle input { position: absolute; opacity: 0; inset: 0; width: 100%; height: 100%; }
.toggle::after { content: ""; position: absolute; right: 6px; top: 5px; width: 10px; height: 10px; border-radius: 50%; background: #fff; }
.lbl { display: block; height: 20px; margin: 11px 0 4px; }
.lbl.gap { margin-top: 16px; }
.row { display: flex; gap: 5px; align-items: center; }
.sel, .numbox { position: relative; height: 30px; }
.sel select, .numbox input, .txt { width: 100%; height: 30px; border: 1px solid #8a8886; border-radius: 2px; background: #fff; color: #605e5c; padding: 0 10px; appearance: none; display: block; }
.txt { color: #252423; padding: 0 8px; }
.numbox input { padding: 0 5px; }
.sel svg { position: absolute; right: 8px; top: 8px; pointer-events: none; }
.spins { position: absolute; right: 3px; top: 4px; display: flex; flex-direction: column; gap: 2px; }
.spins svg { color: #605e5c; }
.w1 { width: 113px; }
.w2 { width: 67px; }
.w3 { width: 68px; }
.biu { margin-top: 5px; }
.biu button { width: 30px; height: 29px; border: 1px solid #8a8886; border-radius: 2px; background: #fff; font-size: 20px; line-height: 26px; }
.biu .on { background: #d2d0ce; }
.bb { font-weight: 700; }
.ii { font-family: "Liberation Serif", serif; font-style: italic; }
.uu { text-decoration: underline; }
.swatch, .fxb { height: 30px; border: 1px solid #8a8886; border-radius: 2px; background: #fff; }
.swatch { width: 65px; display: flex; align-items: center; justify-content: space-between; padding: 0 5px; }
.swatch i { width: 20px; height: 20px; background: #605e5c; border: 1px solid #8a8886; }
.fxb { width: 30px; font: italic 20px/26px "Liberation Serif", serif; }
.mh { margin-top: 19px; gap: 15px; }
.slider { appearance: none; width: 100px; height: 22px; background: linear-gradient(to right, #605e5c 28%, #e9e8e7 28%) center / 100% 6px no-repeat; }
.slider::-webkit-slider-thumb { appearance: none; width: 21px; height: 21px; border-radius: 50%; background: #fff; border: 2px solid #605e5c; box-shadow: 0 1px 3px rgba(0,0,0,.3); }
.thumb { position: absolute; background: #8a8886; border-radius: 4px; width: 7px; }
.ft { right: 0; top: 10px; height: 109px; }
.bt { right: 0; top: 47px; height: 674px; }
.dt { right: 6px; top: 97px; width: 10px; height: 105px; border-radius: 0; }

.bbody { flex: 1; min-height: 0; overflow: hidden; margin: -4px 0 10px; padding: 0 10px; }
.slabel { height: 26px; line-height: 22px; }
.vgrid { height: 267px; width: 205px; border: 1px solid #797774; border-radius: 2px; background: #fff; padding: 2px 4px; display: grid; grid-template-columns: repeat(6, 1fr); grid-template-rows: repeat(8, 1fr); }
.vgrid button { display: flex; align-items: center; justify-content: center; border: 1px solid transparent; margin: 1px; }
.vgrid .picked { border-color: #252423; }
.wlabel { height: 35px; padding-top: 11px; }
.well { width: 205px; border: 1px dashed #605e5c; border-radius: 2px; background: #fff; padding: 5px; display: flex; flex-direction: column; gap: 5px; }
.well button, .field { height: 37px; border: 1px solid #605e5c; border-radius: 3px; }
.well button { font-weight: 600; }
.field { background: #fafafa; display: flex; align-items: center; padding: 0 9px 0 7px; white-space: nowrap; }
.field span { flex: 1; }
.field i { width: 1px; height: 20px; background: #605e5c; margin: 0 12px 0 10px; }

.data { width: 227px; border-right: 1px solid #e1dfdd; }
.tree { flex: 1; min-height: 0; overflow: hidden; margin-top: 12px; color: #3b3a39; }
.trow, .frow { height: 30px; display: flex; align-items: center; white-space: nowrap; }
.trow { padding-left: 16px; }
.tc { margin-right: 6px; }
.ti { position: relative; display: flex; margin-right: 5px; }
.badge { position: absolute; left: 8px; top: 8px; }
.frow { padding-left: 55px; }
.frow input { appearance: none; width: 15px; height: 15px; border: 1px solid #797774; border-radius: 2px; margin-right: 11px; flex: none; position: relative; }
.frow input:checked { background: #117865; border-color: #117865; }
.frow input:checked::after { content: ""; position: absolute; left: 2px; top: 2px; width: 9px; height: 5px; border: solid #fff; border-width: 0 0 1px 1px; transform: rotate(-45deg); }
.sg { width: 14px; display: flex; margin-right: 8px; }

.rail { width: 38px; background: #faf9f8; display: flex; flex-direction: column; flex: none; }
.rail button { height: 40px; display: flex; align-items: center; justify-content: center; padding-left: 2px; }
.rail .on { background: #e1dfdd; border: 1px solid #605e5c; border-right: 0; }
.rail .gearb { margin-top: auto; border-top: 1px solid #e1dfdd; }

.status { flex: none; height: 21px; border-top: 1px solid #e1dfdd; display: flex; justify-content: flex-end; align-items: flex-end; gap: 6px; padding-right: 20px; color: #605e5c; overflow: hidden; }
.status button { font-size: 18px; line-height: 16px; height: 16px; }
.status span { font-size: 14px; line-height: 16px; margin: 0 19px 0 11px; }
.status input { appearance: none; width: 125px; height: 14px; background: linear-gradient(#605e5c, #605e5c) center / 100% 1px no-repeat, linear-gradient(#605e5c, #605e5c) 62px center / 1px 7px no-repeat; }
.status input::-webkit-slider-thumb { appearance: none; width: 5px; height: 14px; background: #605e5c; }

.note { position: absolute; inset: 0; width: 100%; height: 100%; pointer-events: none; z-index: 3; }
.mark { mix-blend-mode: multiply; }
</style>
